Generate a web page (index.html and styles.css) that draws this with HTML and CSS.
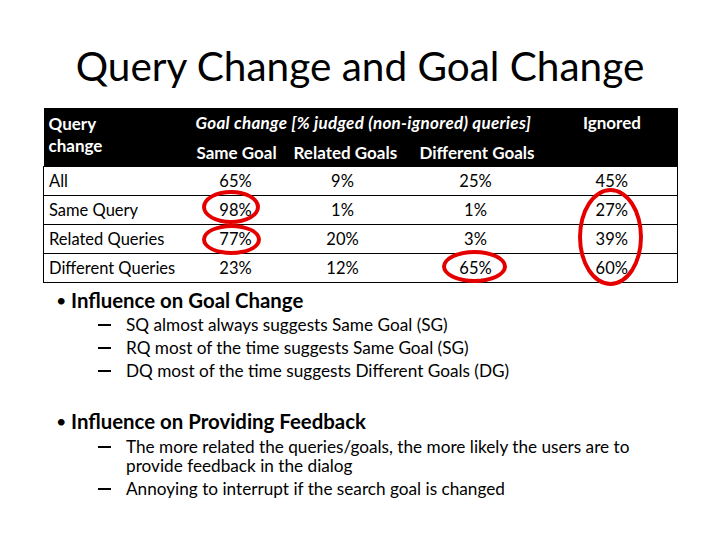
FILE: index.html
```html
<!DOCTYPE html>
<html>
<head>
<meta charset="utf-8">
<link rel="stylesheet" href="styles.css">
</head>
<body>
<div class="slide">
  <h1 class="title">Query Change and Goal Change</h1>
  <div class="table-wrap">
    <table class="data">
      <colgroup>
        <col class="w0"><col class="w1"><col class="w2"><col class="w3"><col class="w4">
      </colgroup>
      <thead>
        <tr class="h1row">
          <th class="qc" rowspan="2">Query<br>change</th>
          <th class="gc" colspan="3">Goal change [% judged (non-ignored) queries]</th>
          <th class="ign" rowspan="2">Ignored</th>
        </tr>
        <tr class="h2row">
          <th class="c1">Same Goal</th>
          <th class="c2">Related Goals</th>
          <th class="c3">Different Goals</th>
        </tr>
      </thead>
      <tbody>
        <tr><td>All</td><td>65%</td><td>9%</td><td>25%</td><td>45%</td></tr>
        <tr><td>Same Query</td><td>98%</td><td>1%</td><td>1%</td><td>27%</td></tr>
        <tr><td>Related Queries</td><td>77%</td><td>20%</td><td>3%</td><td>39%</td></tr>
        <tr><td>Different Queries</td><td>23%</td><td>12%</td><td>65%</td><td>60%</td></tr>
      </tbody>
    </table>
    <div class="ring r98"></div>
    <div class="ring r77"></div>
    <div class="ring r65"></div>
    <div class="ring rign"></div>
  </div>
  <ul class="bullets">
    <li class="b1">Influence on Goal Change
      <ul class="sub">
        <li>SQ almost always suggests Same Goal (SG)</li>
        <li>RQ most of the time suggests Same Goal (SG)</li>
        <li>DQ most of the time suggests Different Goals (DG)</li>
      </ul>
    </li>
    <li class="b2">Influence on Providing Feedback
      <ul class="sub">
        <li>The more related the queries/goals, the more likely the users are to provide feedback in the dialog</li>
        <li>Annoying to interrupt if the search goal is changed</li>
      </ul>
    </li>
  </ul>
</div>
</body>
</html>
```
FILE: styles.css
```css
* { box-sizing: border-box; }
html, body { margin: 0; padding: 0; background: #fff; }
body { font-family: Lato, "Open Sans", sans-serif; color: #000; }
.slide { width: 720px; height: 540px; overflow: hidden; position: relative; }
.title {
  margin: 0;
  padding-top: 42px;
  height: 108px;
  text-align: center;
  font-weight: 400;
  font-size: 40.5px;
  line-height: 48px;
}
.table-wrap { position: relative; margin-left: 43px; width: 634px; height: 176px; }
.data { border-collapse: collapse; width: 634px; font-size: 16.5px; table-layout: fixed; }
.w0 { width: 147px; }
.w1 { width: 90px; }
.w2 { width: 124px; }
.w3 { width: 142px; }
.w4 { width: 131px; }
.data thead th { background: #000; color: #fff; font-weight: 700; text-align: left; padding: 0; vertical-align: top; font-size: 17px; white-space: nowrap; }
.h1row { height: 31px; }
.h2row { height: 27px; }
.qc { padding: 5px 0 0 5px !important; line-height: 22px; white-space: normal !important; }
.gc { font-style: italic; padding: 6px 0 0 5px !important; line-height: 17px; letter-spacing: 0.3px; }
.ign { text-align: center !important; padding-top: 6px !important; line-height: 17px; }
.h2row th { line-height: 17px; padding-top: 5px !important; }
.c1 { padding-left: 6px !important; }
.c2 { padding-left: 13px !important; }
.c3 { padding-left: 15px !important; }
.data tbody td {
  height: 29px; padding: 0; text-align: center;
  border-top: 1px solid #000; border-bottom: 1px solid #000;
}
.data tbody td:first-child { text-align: left; padding-left: 5px; border-left: 1px solid #000; }
.data tbody td:last-child { border-right: 1px solid #000; }
.ring { position: absolute; border: 4.5px solid #e50000; border-radius: 50%; }
.r98 { left: 159px; top: 82px; width: 58px; height: 34px; }
.r77 { left: 159px; top: 116px; width: 59px; height: 31px; }
.r65 { left: 399px; top: 142px; width: 65px; height: 33px; }
.rign { left: 535px; top: 80px; width: 65px; height: 98px; }
.bullets { list-style: none; margin: 0; padding: 0 0 0 71px; width: 660px; }
.bullets > li { position: relative; font-weight: 700; font-size: 20.4px; line-height: 24px; }
.bullets > li::before { content: "\2022"; position: absolute; left: -15px; top: 0; font-weight: 400; font-size: 18px; }
.b1 { margin-top: 4px; }
.b2 { margin-top: 29px; }
.sub { list-style: none; margin: 0; padding: 0 0 0 55px; }
.sub li { position: relative; font-weight: 400; font-size: 17.2px; line-height: 19px; margin-top: 4px; }
.sub li::before { content: ""; position: absolute; left: -28px; top: 9px; width: 13px; height: 2px; background: #000; }
.b1 .sub li { margin-top: 4px; }
.b1 .sub li:first-child { margin-top: 3px; }
.b2 .sub li:first-child { margin-top: 4px; }
```
